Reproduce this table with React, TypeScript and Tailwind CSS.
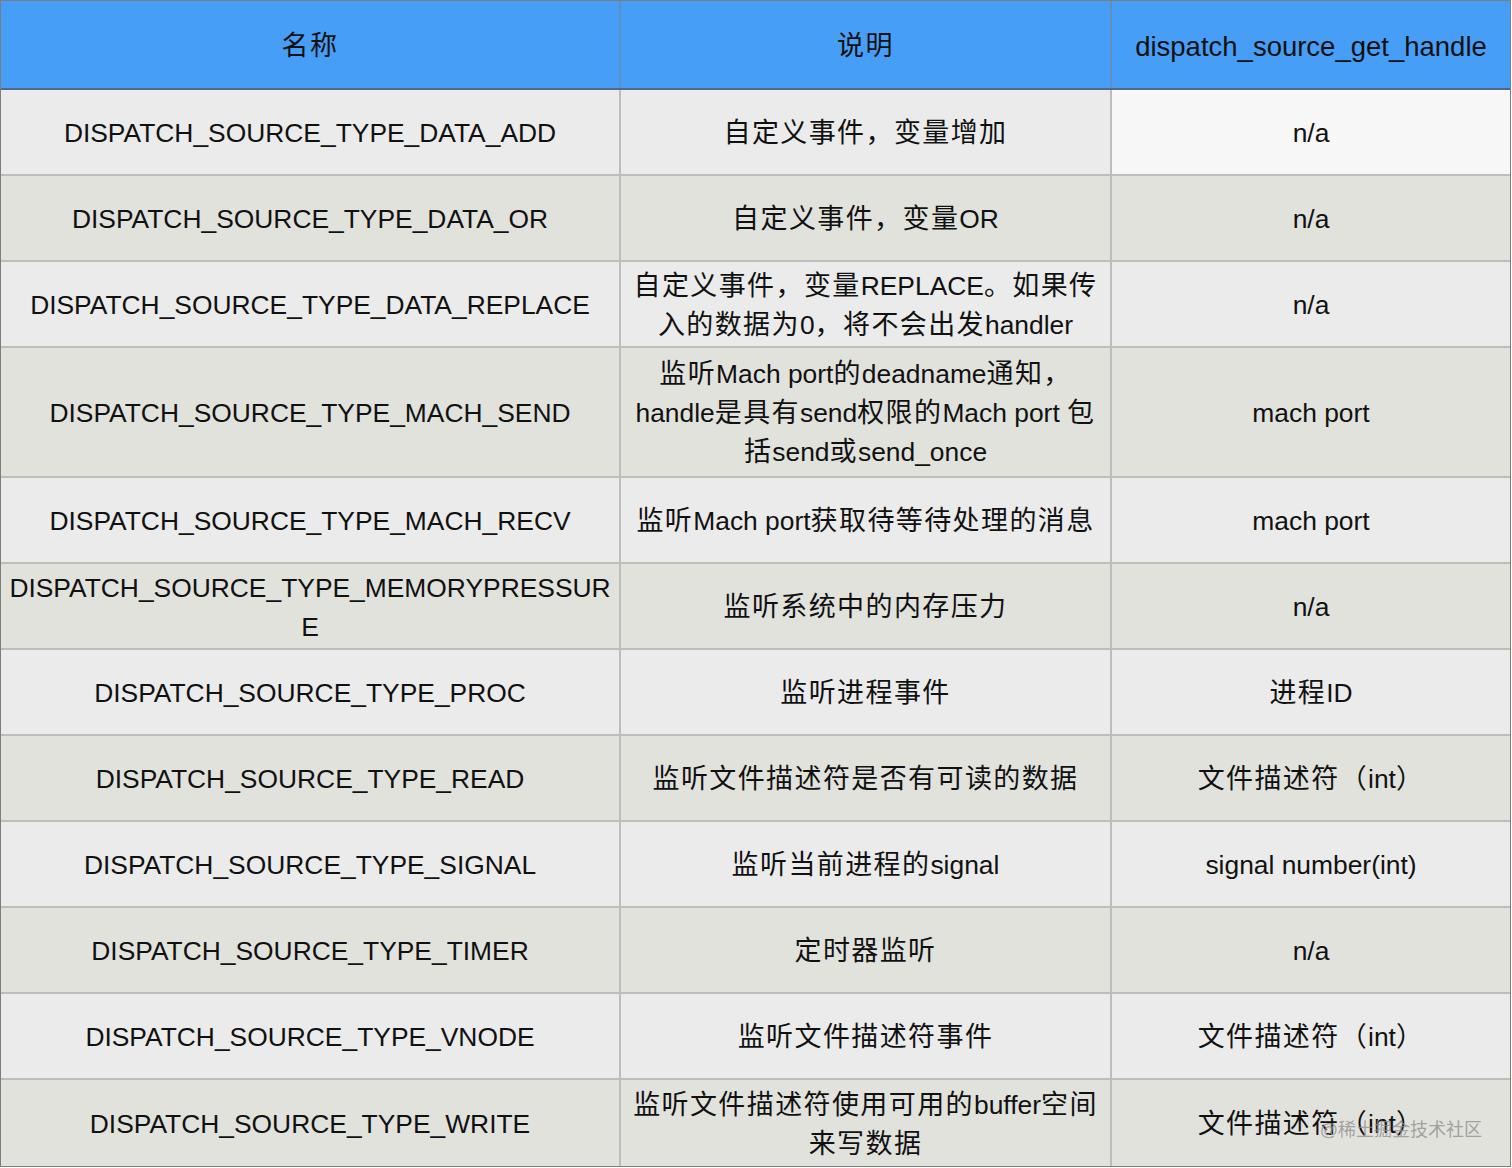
import React from 'react';

interface Row {
  name: string;
  desc: string[];
  handle: string;
  tall?: boolean;
}

const rows: Row[] = [
  { name: 'DISPATCH_SOURCE_TYPE_DATA_ADD', desc: ['自定义事件，变量增加'], handle: 'n/a' },
  { name: 'DISPATCH_SOURCE_TYPE_DATA_OR', desc: ['自定义事件，变量OR'], handle: 'n/a' },
  {
    name: 'DISPATCH_SOURCE_TYPE_DATA_REPLACE',
    desc: ['自定义事件，变量REPLACE。如果传', '入的数据为0，将不会出发handler'],
    handle: 'n/a',
  },
  {
    name: 'DISPATCH_SOURCE_TYPE_MACH_SEND',
    desc: ['监听Mach port的deadname通知，', 'handle是具有send权限的Mach port 包', '括send或send_once'],
    handle: 'mach port',
    tall: true,
  },
  { name: 'DISPATCH_SOURCE_TYPE_MACH_RECV', desc: ['监听Mach port获取待等待处理的消息'], handle: 'mach port' },
  { name: 'DISPATCH_SOURCE_TYPE_MEMORYPRESSURE', desc: ['监听系统中的内存压力'], handle: 'n/a' },
  { name: 'DISPATCH_SOURCE_TYPE_PROC', desc: ['监听进程事件'], handle: '进程ID' },
  { name: 'DISPATCH_SOURCE_TYPE_READ', desc: ['监听文件描述符是否有可读的数据'], handle: '文件描述符（int）' },
  { name: 'DISPATCH_SOURCE_TYPE_SIGNAL', desc: ['监听当前进程的signal'], handle: 'signal number(int)' },
  { name: 'DISPATCH_SOURCE_TYPE_TIMER', desc: ['定时器监听'], handle: 'n/a' },
  { name: 'DISPATCH_SOURCE_TYPE_VNODE', desc: ['监听文件描述符事件'], handle: '文件描述符（int）' },
  {
    name: 'DISPATCH_SOURCE_TYPE_WRITE',
    desc: ['监听文件描述符使用可用的buffer空间', '来写数据'],
    handle: '文件描述符（int）',
  },
];

const font = { fontFamily: '"Liberation Sans", "Noto Sans CJK SC", Arial, sans-serif' };

// CJK glyphs in the shot are a bit wider than Noto's, so space them out a little
function Mixed({ text }: { text: string }) {
  const parts = text.split(/([\u3000-\u9fff\uff00-\uffef]+)/);
  return (
    <>
      {parts.map((p, i) =>
        /[\u3000-\u9fff\uff00-\uffef]/.test(p) ? (
          <span key={i} className="text-[27px] tracking-[1.4px]">
            {p}
          </span>
        ) : (
          <span key={i}>{p}</span>
        )
      )}
    </>
  );
}

export default function App() {
  return (
    <div className="bg-white w-[1512px] h-[1168px]" style={font}>
      <div className="relative w-[1511px] border-[1.5px] border-[#7d7d7d] text-[26.4px] leading-[39px] text-[#111]">
        {/* Header */}
        <div className="grid grid-cols-[620px_491px_1fr] h-[89px] bg-[#479ef6] border-b-2 border-[#4f6a86]">
          <div className="flex items-center justify-center pt-1 border-r-2 border-[#5f8fc0]">
            <Mixed text="名称" />
          </div>
          <div className="flex items-center justify-center pt-1 border-r-2 border-[#5f8fc0]">
            <Mixed text="说明" />
          </div>
          <div className="flex items-center justify-center pt-1 text-[27.5px]">dispatch_source_get_handle</div>
        </div>

        {rows.map((r, i) => {
          const even = i % 2 === 0;
          const bg = even ? 'bg-[#ebebeb]' : 'bg-[#e2e2dd]';
          return (
            <div
              key={r.name}
              className={`grid grid-cols-[620px_491px_1fr] ${r.tall ? 'h-[130px]' : 'h-[86px]'} ${
                i < rows.length - 1 ? 'border-b-2 border-[#bdbdbd]' : ''
              } ${bg}`}
            >
              <div className="flex items-center justify-center text-center px-1 pt-[3px] break-all border-r-2 border-[#bdbdbd]">
                {r.name}
              </div>
              <div className="flex flex-col items-center justify-center text-center px-1 pt-[3px] border-r-2 border-[#bdbdbd]">
                {r.desc.map((line) => (
                  <div key={line} className="whitespace-nowrap">
                    <Mixed text={line} />
                  </div>
                ))}
              </div>
              <div className={`flex items-center justify-center text-center px-1 pt-[3px] ${i === 0 ? 'bg-[#f7f7f7]' : ''}`}>
                <Mixed text={r.handle} />
              </div>
            </div>
          );
        })}

        {/* watermark */}
        <div className="absolute right-[28px] bottom-[27px] text-[18px] leading-none text-[#8f8f8f]/80">
          @稀土掘金技术社区
        </div>
      </div>
    </div>
  );
}
